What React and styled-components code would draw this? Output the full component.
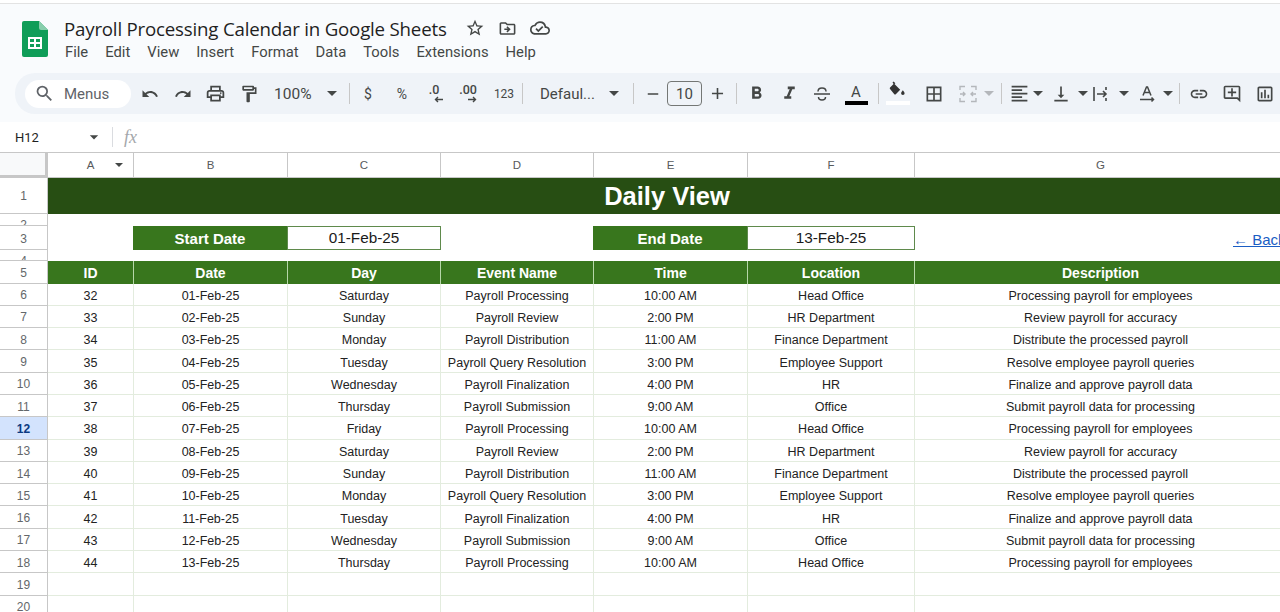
import React from "react";
import styled, { createGlobalStyle } from "styled-components";
import {
  MdAdd,
  MdArrowDropDown,
  MdBorderAll,
  MdFormatAlignLeft,
  MdFormatBold,
  MdFormatItalic,
  MdInsertLink,
  MdOutlineAddComment,
  MdOutlineCloudDone,
  MdOutlineDriveFileMove,
  MdOutlineFormatPaint,
  MdOutlineInsertChart,
  MdOutlinePrint,
  MdRedo,
  MdRemove,
  MdSearch,
  MdStarBorder,
  MdUndo,
  MdVerticalAlignBottom,
} from "react-icons/md";

const COLUMNS = "48px 85px 154px 153px 153px 154px 167px 372px";

const rows = [
  [32, "01-Feb-25", "Saturday", "Payroll Processing", "10:00 AM", "Head Office", "Processing payroll for employees"],
  [33, "02-Feb-25", "Sunday", "Payroll Review", "2:00 PM", "HR Department", "Review payroll for accuracy"],
  [34, "03-Feb-25", "Monday", "Payroll Distribution", "11:00 AM", "Finance Department", "Distribute the processed payroll"],
  [35, "04-Feb-25", "Tuesday", "Payroll Query Resolution", "3:00 PM", "Employee Support", "Resolve employee payroll queries"],
  [36, "05-Feb-25", "Wednesday", "Payroll Finalization", "4:00 PM", "HR", "Finalize and approve payroll data"],
  [37, "06-Feb-25", "Thursday", "Payroll Submission", "9:00 AM", "Office", "Submit payroll data for processing"],
  [38, "07-Feb-25", "Friday", "Payroll Processing", "10:00 AM", "Head Office", "Processing payroll for employees"],
  [39, "08-Feb-25", "Saturday", "Payroll Review", "2:00 PM", "HR Department", "Review payroll for accuracy"],
  [40, "09-Feb-25", "Sunday", "Payroll Distribution", "11:00 AM", "Finance Department", "Distribute the processed payroll"],
  [41, "10-Feb-25", "Monday", "Payroll Query Resolution", "3:00 PM", "Employee Support", "Resolve employee payroll queries"],
  [42, "11-Feb-25", "Tuesday", "Payroll Finalization", "4:00 PM", "HR", "Finalize and approve payroll data"],
  [43, "12-Feb-25", "Wednesday", "Payroll Submission", "9:00 AM", "Office", "Submit payroll data for processing"],
  [44, "13-Feb-25", "Thursday", "Payroll Processing", "10:00 AM", "Head Office", "Processing payroll for employees"],
];

const menus = ["File", "Edit", "View", "Insert", "Format", "Data", "Tools", "Extensions", "Help"];
const headers = ["ID", "Date", "Day", "Event Name", "Time", "Location", "Description"];
const letters = ["A", "B", "C", "D", "E", "F", "G"];

const SheetsLogo = () => (
  <svg width="26" height="36" viewBox="0 0 26 36">
    <path d="M2 0h15l9 9v25a2 2 0 0 1-2 2H2a2 2 0 0 1-2-2V2a2 2 0 0 1 2-2z" fill="#0f9d58" />
    <path d="M17 0l9 9h-7a2 2 0 0 1-2-2z" fill="#87ceac" />
    <path d="M6 16h14v12H6zM8 18v3h4v-3zm6 0v3h4v-3zm-6 5v3h4v-3zm6 0v3h4v-3z" fill="#fff" fillRule="evenodd" />
  </svg>
);

const MergeIcon = () => (
  <svg width="18" height="18" viewBox="0 0 18 18" fill="none" stroke="#b4b7bb" strokeWidth="1.4">
    <path d="M1 5V1.500h5M12 1.500h5V5M1 13v3.500h5M12 16.500h5V13" />
    <path d="M1 9h5M4 7l2 2-2 2M17 9h-5M14 7l-2 2 2 2" />
  </svg>
);

const WrapIcon = () => (
  <svg width="18" height="18" viewBox="0 0 18 18" fill="none" stroke="#444746" strokeWidth="1.6">
    <path d="M2 2v14M14 2v3M14 13v3M5 9h9M11 6l3 3-3 3" />
  </svg>
);

const RotateIcon = () => (
  <svg width="18" height="18" viewBox="0 0 18 18" fill="none" stroke="#444746" strokeWidth="1.5">
    <path d="M5 10.500L8.500 2h1L13 10.500M6.300 7.500h5.400M2 14.500h13M13.500 12.500l2 2-2 2" />
  </svg>
);

const StrikeIcon = () => (
  <svg width="18" height="18" viewBox="0 0 18 18" fill="none" stroke="#444746" strokeWidth="1.5">
    <path d="M1 9h16M5 6.500C5 4 7 3 9 3s4 1 4 3.500M5.500 12c0 2 1.500 3 3.500 3s3.500-1 3.500-3" />
  </svg>
);

const FillIcon = () => (
  <svg width="18" height="15" viewBox="0 0 20 17">
    <path d="M5 0.500l2 2-1 1 6.500 6.500-5 5a1.200 1.200 0 0 1-1.700 0L1 9.200a1.200 1.200 0 0 1 0-1.700L5 3.500 3.800 1.700z" fill="#333" />
    <path d="M15.500 10.500c1.200 1.600 2 2.600 2 3.500a2 2 0 0 1-4 0c0-0.900 0.800-1.900 2-3.500z" fill="#333" />
  </svg>
);

const SmallArrow = ({ right }) => (
  <svg width="9" height="7" viewBox="0 0 9 7" fill="none" stroke="#444746" strokeWidth="1.4">
    {right ? <path d="M0 3.500h7M5 1l2.500 2.500L5 6" /> : <path d="M9 3.500H2M4 1L1.500 3.500 4 6" />}
  </svg>
);

const App = () => (
  <Page>
    <GlobalStyle />
    <TopLine />
    <Header>
      <LogoSlot>
        <SheetsLogo />
      </LogoSlot>
      <TitleBlock>
        <TitleRow>
          <DocTitle>Payroll Processing Calendar in Google Sheets</DocTitle>
          <MdStarBorder size={20} />
          <MdOutlineDriveFileMove size={19} />
          <MdOutlineCloudDone size={20} />
        </TitleRow>
        <MenuBar>
          {menus.map((m) => (
            <MenuItem key={m}>{m}</MenuItem>
          ))}
        </MenuBar>
      </TitleBlock>
    </Header>

    <ToolbarWrap>
      <Toolbar>
        <SearchPill>
          <MdSearch size={21} />
          <span>Menus</span>
        </SearchPill>
        <ToolSlot $w={33} $first><MdUndo size={18} /></ToolSlot>
        <ToolSlot $w={33}><MdRedo size={18} /></ToolSlot>
        <ToolSlot $w={33}><MdOutlinePrint size={21} /></ToolSlot>
        <ToolSlot $w={33}><MdOutlineFormatPaint size={20} /></ToolSlot>
        <ToolText $w={54} $size={15.500} $left={9}>100%</ToolText>
        <Caret $w={26} />
        <Divider />
        <ToolText $w={28} $size={14}>$</ToolText>
        <ToolText $w={40} $size={14}>%</ToolText>
        <DecimalButton $w={24}>
          <b>.0</b>
          <SmallArrow />
        </DecimalButton>
        <DecimalButton $w={44}>
          <b>.00</b>
          <SmallArrow right />
        </DecimalButton>
        <ToolText $w={28} $size={12}>123</ToolText>
        <Divider />
        <ToolText $w={72} $size={15} $left={13}>Defaul...</ToolText>
        <Caret $w={30} />
        <Divider />
        <ToolSlot $w={29}><MdRemove size={18} /></ToolSlot>
        <SizeBox>10</SizeBox>
        <ToolSlot $w={30}><MdAdd size={19} /></ToolSlot>
        <Divider />
        <ToolSlot $w={31}><MdFormatBold size={21} /></ToolSlot>
        <ToolSlot $w={34}><MdFormatItalic size={21} /></ToolSlot>
        <ToolSlot $w={32}><StrikeIcon /></ToolSlot>
        <ToolSlot $w={36}>
          <ColorLetter>A</ColorLetter>
        </ToolSlot>
        <Divider />
        <ToolSlot $w={30}>
          <FillSwatch>
            <FillIcon />
          </FillSwatch>
        </ToolSlot>
        <ToolSlot $w={42}><MdBorderAll size={20} /></ToolSlot>
        <ToolSlot $w={26}><MergeIcon /></ToolSlot>
        <Caret $w={16} $muted />
        <Divider />
        <ToolSlot $w={26}><MdFormatAlignLeft size={21} /></ToolSlot>
        <Caret $w={12} />
        <ToolSlot $w={34}><MdVerticalAlignBottom size={20} /></ToolSlot>
        <Caret $w={10} />
        <ToolSlot $w={26}><WrapIcon /></ToolSlot>
        <Caret $w={20} />
        <ToolSlot $w={26}><RotateIcon /></ToolSlot>
        <Caret $w={15} />
        <Divider />
        <ToolSlot $w={30}><MdInsertLink size={20} /></ToolSlot>
        <ToolSlot $w={36}><MdOutlineAddComment size={20} /></ToolSlot>
        <ToolSlot $w={30}><MdOutlineInsertChart size={20} /></ToolSlot>
      </Toolbar>
    </ToolbarWrap>

    <FormulaBar>
      <NameBox>H12</NameBox>
      <MdArrowDropDown size={20} color="#444746" />
      <FormulaDivider />
      <FxMark>fx</FxMark>
    </FormulaBar>

    <Sheet>
      <SheetRow $h={25}>
        <Corner />
        {letters.map((l, i) => (
          <ColumnHead key={l}>
            {l}
            {i === 0 && <FilterCaret />}
          </ColumnHead>
        ))}
      </SheetRow>

      <SheetRow $h={35.500}>
        <RowHead>1</RowHead>
        <TitleCell>Daily View</TitleCell>
      </SheetRow>

      <SheetRow $h={12.500}>
        <RowHead $top={4}>2</RowHead>
        <BlankSpan $span={7} />
      </SheetRow>
      <SheetRow $h={24}>
        <RowHead>3</RowHead>
        <BlankSpan />
        <LabelCell>Start Date</LabelCell>
        <ValueCell>01-Feb-25</ValueCell>
        <BlankSpan />
        <LabelCell>End Date</LabelCell>
        <ValueCell>13-Feb-25</ValueCell>
        <BackCell>
          <BackLink href="#back">← Back</BackLink>
        </BackCell>
      </SheetRow>
      <SheetRow $h={11}>
        <RowHead $top={4}>4</RowHead>
        <BlankSpan $span={7} />
      </SheetRow>

      <SheetRow $h={22.500}>
        <RowHead>5</RowHead>
        {headers.map((h) => (
          <HeaderCell key={h}>{h}</HeaderCell>
        ))}
      </SheetRow>

      {rows.map((r, i) => (
        <SheetRow $h={22.300} key={r[0]}>
          <RowHead $active={i + 6 === 12}>{i + 6}</RowHead>
          {r.map((c, j) => (
            <DataCell key={j}>{c}</DataCell>
          ))}
        </SheetRow>
      ))}

      {[19, 20].map((n) => (
        <SheetRow $h={22.300} key={n}>
          <RowHead>{n}</RowHead>
          {letters.map((l) => (
            <DataCell key={l} />
          ))}
        </SheetRow>
      ))}
    </Sheet>
  </Page>
);

export default App;

const GlobalStyle = createGlobalStyle`
  html, body {
    margin: 0;
    padding: 0;
    background: #fff;
    overflow: hidden;
  }
  * {
    box-sizing: border-box;
  }
`;

const Page = styled.div`
  width: 1280px;
  height: 612px;
  overflow: hidden;
  font-family: "Liberation Sans", Arial, sans-serif;
  background: #fff;
`;

const TopLine = styled.div`
  height: 4px;
  background: #fff;
  border-bottom: 1px solid #e3e3e3;
`;

const Header = styled.header`
  display: flex;
  height: 69px;
  background: #f9fbfd;
`;

const LogoSlot = styled.div`
  padding: 17px 0 0 22px;
  width: 64px;
`;

const TitleBlock = styled.div`
  display: flex;
  flex-direction: column;
`;

const TitleRow = styled.div`
  display: flex;
  align-items: center;
  gap: 13px;
  height: 24px;
  margin-top: 12px;
  color: #444746;
`;

const DocTitle = styled.div`
  font-family: "Open Sans", sans-serif;
  font-size: 18.700px;
  letter-spacing: -0.2px;
  color: #1f1f1f;
  white-space: nowrap;
  margin-right: 5px;
`;

const MenuBar = styled.nav`
  display: flex;
  gap: 17px;
  margin: 4px 0 0 1px;
`;

const MenuItem = styled.span`
  font-family: "Roboto", sans-serif;
  font-size: 14.800px;
  color: #444746;
  line-height: 17px;
`;

const ToolbarWrap = styled.div`
  height: 49px;
  background: #f9fbfd;
`;

const Toolbar = styled.div`
  display: flex;
  align-items: center;
  width: 1296px;
  height: 41px;
  padding-left: 10px;
  background: #eff3f8;
  border-radius: 20px 0 0 20px;
  margin-left: 15px;
  color: #444746;
`;

const SearchPill = styled.div`
  display: flex;
  align-items: center;
  gap: 9px;
  flex: none;
  width: 106px;
  height: 28px;
  padding-left: 9px;
  background: #fff;
  border-radius: 14px;
  font-family: "Roboto", sans-serif;
  font-size: 15px;
  color: #5f6368;
`;

const ToolSlot = styled.div`
  display: flex;
  align-items: center;
  justify-content: center;
  flex: none;
  width: ${(p) => p.$w}px;
  height: 28px;
  margin-left: ${(p) => (p.$first ? "2px" : "0")};
`;

const ToolText = styled(ToolSlot)`
  font-family: "Roboto", sans-serif;
  font-size: ${(p) => p.$size}px;
  padding-left: ${(p) => p.$left || 0}px;
  justify-content: ${(p) => (p.$left ? "flex-start" : "center")};
  white-space: nowrap;
`;

const DecimalButton = styled(ToolSlot)`
  flex-direction: column;
  align-items: center;
  gap: 0;
  font-family: "Roboto", sans-serif;
  line-height: 12px;

  b {
    font-size: 12.500px;
    font-weight: 500;
  }
  svg {
    margin-left: 8px;
  }
`;

const CaretShape = styled.i`
  display: block;
  flex: none;
  width: 0;
  height: 0;
  border-left: 5px solid transparent;
  border-right: 5px solid transparent;
  border-top: 5px solid ${(p) => (p.$muted ? "#b4b7bb" : "#444746")};
`;

const Caret = ({ $w, $muted }) => (
  <ToolSlot $w={$w}>
    <CaretShape $muted={$muted} />
  </ToolSlot>
);

const Divider = styled.div`
  flex: none;
  width: 1px;
  height: 21px;
  margin: 0 4px;
  background: #c7c7c7;
`;

const SizeBox = styled.div`
  display: flex;
  align-items: center;
  justify-content: center;
  flex: none;
  width: 35px;
  height: 25px;
  border: 1px solid #747775;
  border-radius: 4px;
  font-family: "Roboto", sans-serif;
  font-size: 15px;
`;

const ColorLetter = styled.span`
  display: block;
  width: 23px;
  height: 22px;
  border-bottom: 4px solid #000;
  text-align: center;
  font-family: "Roboto", sans-serif;
  font-size: 15px;
  line-height: 18px;
`;

const FillSwatch = styled.span`
  display: flex;
  justify-content: center;
  width: 24px;
  height: 24px;
  margin-top: -2px;
  border-bottom: 4px solid #fff;
`;

const FormulaBar = styled.div`
  display: flex;
  align-items: center;
  height: 30px;
  padding-left: 15px;
  background: #fff;
`;

const NameBox = styled.span`
  width: 69px;
  font-family: "Roboto", sans-serif;
  font-size: 13px;
  color: #1f1f1f;
`;

const FormulaDivider = styled.div`
  width: 1px;
  height: 20px;
  margin-left: 8px;
  background: #dadce0;
`;

const FxMark = styled.span`
  margin-left: 11px;
  font-family: "Liberation Serif", serif;
  font-style: italic;
  font-size: 18px;
  color: #a4a7ab;
`;

const Sheet = styled.section`
  border-top: 1px solid #c7c7c7;
`;

const SheetRow = styled.div`
  display: grid;
  grid-template-columns: ${COLUMNS};
  height: ${(p) => p.$h}px;
`;

const Corner = styled.div`
  background: #f8f9fa;
  border-right: 3px solid #c7c7c7;
  border-bottom: 3px solid #c7c7c7;
`;

const ColumnHead = styled.div`
  position: relative;
  display: flex;
  align-items: center;
  justify-content: center;
  border-bottom: 1px solid #c7c7c7;
  font-size: 11.500px;
  color: #575a5c;

  & + & {
    border-left: 1px solid #c7c7c7;
  }
`;

const FilterCaret = styled.i`
  position: absolute;
  top: 10px;
  right: 10px;
  width: 0;
  height: 0;
  border-left: 4px solid transparent;
  border-right: 4px solid transparent;
  border-top: 4px solid #444746;
`;

const RowHead = styled.div`
  display: flex;
  align-items: ${(p) => (p.$top ? "flex-start" : "center")};
  justify-content: center;
  overflow: hidden;
  padding-top: ${(p) => p.$top || 2}px;
  border-right: 1px solid #c7c7c7;
  border-bottom: 1px solid #c7c7c7;
  background: ${(p) => (p.$active ? "#d3e3fd" : "#fff")};
  font-size: 12px;
  line-height: 14px;
  font-weight: ${(p) => (p.$active ? 700 : 400)};
  color: ${(p) => (p.$active ? "#0b3a82" : "#63676a")};
`;

const TitleCell = styled.div`
  grid-column: span 7;
  display: flex;
  align-items: center;
  justify-content: center;
  padding-top: 1px;
  background: #274e13;
  color: #fff;
  font-size: 25.500px;
  font-weight: 700;
`;

const BlankSpan = styled.div`
  grid-column: span ${(p) => p.$span || 1};
`;

const LabelCell = styled.div`
  display: flex;
  align-items: center;
  justify-content: center;
  background: #38761d;
  color: #fff;
  font-size: 15px;
  font-weight: 700;
`;

const ValueCell = styled.div`
  display: flex;
  align-items: center;
  justify-content: center;
  margin-right: -1px;
  border: 1px solid #5f8a4c;
  color: #1a1a1a;
  font-size: 15.300px;
`;

const BackCell = styled.div`
  display: flex;
  align-items: center;
  padding: 3px 0 0 319px;
  white-space: nowrap;
`;

const BackLink = styled.a`
  color: #1a5dc4;
  font-size: 15px;
`;

const HeaderCell = styled.div`
  display: flex;
  align-items: center;
  justify-content: center;
  padding-top: 2px;
  background: #38761d;
  color: #fff;
  font-size: 14px;
  font-weight: 700;

  & + & {
    border-left: 1px solid #b6d7a8;
  }
`;

const DataCell = styled.div`
  display: flex;
  align-items: center;
  justify-content: center;
  padding-top: 3px;
  border-bottom: 1px solid #e3ecde;
  color: #222;
  font-size: 12.500px;
  white-space: nowrap;

  & + & {
    border-left: 1px solid #e3ecde;
  }
`;
